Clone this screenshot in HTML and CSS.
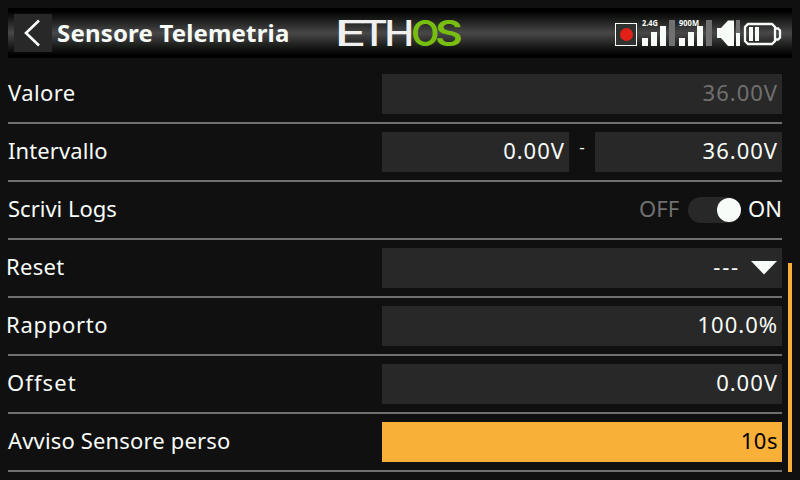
FILE: index.html
```html
<!DOCTYPE html>
<html lang="it">
<head>
<meta charset="utf-8">
<title>Sensore Telemetria</title>
<link rel="stylesheet" href="styles.css">
</head>
<body>
<header class="topbar">
  <button class="back" aria-label="Indietro">
    <svg width="38" height="38" viewBox="0 0 38 38"><path d="M25 6.500 12 19 25 31.500" fill="none" stroke="#f8fcf8" stroke-width="2.6"/></svg>
  </button>
  <h1 class="title">Sensore Telemetria</h1>
  <svg class="logo" width="126" height="50" viewBox="337 8 126 50">
    <g class="logo-text">
      <text transform="translate(334.7 46) scale(1.5 1)">E</text>
      <text transform="translate(360.500 46) scale(1.2 1)">T</text>
      <text transform="translate(384.200 46) scale(1.15 1)">H</text>
      <g class="logo-green">
        <text transform="translate(411.300 46) scale(1.04 1)">O</text>
        <text transform="translate(434.900 46) scale(1.22 1)">S</text>
      </g>
    </g>
  </svg>
  <svg class="status" width="168" height="30" viewBox="614 18 168 30">
    <rect x="615.5" y="23.5" width="21" height="22" fill="#303230" stroke="#f8fcf8"/>
    <circle cx="626.5" cy="34.5" r="6.5" fill="#e32018"/>
    <g fill="#f8fcf8">
      <text class="band" x="642" y="26" textLength="16" lengthAdjust="spacingAndGlyphs">2.4G</text>
      <path d="M642 38h6v8h-6zM651 32h6v14h-6zM660 26h6v20h-6z"/>
      <text class="band" x="679" y="26" textLength="20" lengthAdjust="spacingAndGlyphs">900M</text>
      <path d="M679 38h6v8h-6zM688 32h6v14h-6zM697 26h6v20h-6z"/>
      <path d="M717 28h4l7-7.5h6V46h-6l-7-8h-4z"/>
      <path d="M736 33h4v13h-4z"/>
      <path d="M749 27h4v14h-4zM755 27h4v14h-4z"/>
    </g>
    <path d="M669 20h6v26h-6zM706 20h6v26h-6zM736 20h4v13h-4z" fill="#707070"/>
    <path d="M748 24h24l3 3v14l-3 3h-24l-3-3V27zM776 28.500h2l2 2v7l-2 2h-2" fill="none" stroke="#f8fcf8" stroke-width="2.3"/>
  </svg>
</header>
<main class="form">
  <div class="row"><span class="label valore">Valore</span><div class="control"><div class="field disabled">36.00V</div></div></div>
  <div class="row"><span class="label intervallo">Intervallo</span><div class="control"><div class="field">0.00V</div><span class="dash">-</span><div class="field">36.00V</div></div></div>
  <div class="row"><span class="label logs">Scrivi Logs</span><div class="control switch"><span class="off">OFF</span><span class="track"><span class="knob"></span></span><span class="on">ON</span></div></div>
  <div class="row"><span class="label reset">Reset</span><div class="control"><div class="field select"><span class="choice">---</span><svg width="26" height="14" viewBox="0 0 26 14"><path d="M0 0h26L13 13.500z" fill="#f8fcf8"/></svg></div></div></div>
  <div class="row"><span class="label rapporto">Rapporto</span><div class="control"><div class="field">100.0%</div></div></div>
  <div class="row"><span class="label offset">Offset</span><div class="control"><div class="field">0.00V</div></div></div>
  <div class="row"><span class="label avviso">Avviso Sensore perso</span><div class="control"><div class="field focused">10s</div></div></div>
</main>
<div class="scrollbar"></div>
</body>
</html>
```
FILE: styles.css
```css
* { box-sizing: border-box; }
body {
  margin: 0;
  width: 800px;
  height: 480px;
  padding: 8px;
  overflow: hidden;
  background: #101010;
  color: #f8fcf8;
  font-family: "Noto Sans", sans-serif;
  font-size: 22px;
  position: relative;
}
.topbar {
  display: flex;
  align-items: center;
  height: 50px;
  padding-left: 6px;
  background: linear-gradient(#000 0%, #000 6%, #181a18 22%, #484848 50%, #181a18 78%, #000 94%, #000 100%);
}
.back {
  display: block;
  width: 38px;
  height: 38px;
  margin: 0 5px 0 0;
  padding: 0;
  border: 0;
  background: #282828;
}
.back svg { display: block; }
.title {
  width: 280px;
  margin: 0;
  font-size: 24px;
  line-height: 50px;
  height: 50px;
  letter-spacing: 0.17px;
  font-weight: 700;
  white-space: nowrap;
}
.logo { flex: none; overflow: visible; }
.logo-text {
  font-family: Inter, sans-serif;
  font-size: 35px;
  font-weight: 500;
  fill: #f0f0f0;
}
.logo-green { fill: #78be10; font-weight: 600; }
.status { flex: none; margin-left: 151px; }
.band {
  font-size: 8px;
  font-weight: 700;
}
.form { width: 774px; margin-top: 8px; }
.row {
  display: flex;
  justify-content: space-between;
  height: 58px;
  padding: 8px 0;
  border-bottom: 2px solid #707070;
}
.label { line-height: 36px; white-space: nowrap; }
.valore { letter-spacing: 0.4px; }
.intervallo { letter-spacing: 0.1px; }
.reset { margin-left: -2px; letter-spacing: 0.3px; }
.rapporto { margin-left: -2px; letter-spacing: 0.7px; }
.offset { margin-left: -1px; letter-spacing: 1.1px; font-variant-ligatures: none; }
.avviso { letter-spacing: 0.16px; }
.control { display: flex; width: 400px; height: 40px; }
.field {
  flex: 1;
  padding-right: 4px;
  background: #282828;
  text-align: right;
  line-height: 36px;
  letter-spacing: 1px;
}
.disabled { color: #707070; }
.focused { background: #f8b038; color: #000; letter-spacing: 0.5px; }
.dash { width: 26px; font-size: 17px; line-height: 30px; text-align: center; }
.select {
  display: flex;
  justify-content: flex-end;
  gap: 11px;
  padding-right: 5px;
}
.select svg { margin-top: 13px; }
.choice { letter-spacing: 1.8px; }
.switch { justify-content: flex-end; line-height: 36px; }
.off { color: #707070; margin-right: 9px; }
.track {
  display: flex;
  justify-content: flex-end;
  width: 53px;
  height: 26px;
  padding: 1px 0;
  border-radius: 13px;
  background: #282828;
  margin: 7px 7px 0 0;
}
.knob { width: 24px; height: 24px; border-radius: 50%; background: #f8fcf8; }
.scrollbar {
  position: absolute;
  left: 788px;
  top: 263px;
  width: 4px;
  height: 209px;
  background: #f8b038;
}
```
